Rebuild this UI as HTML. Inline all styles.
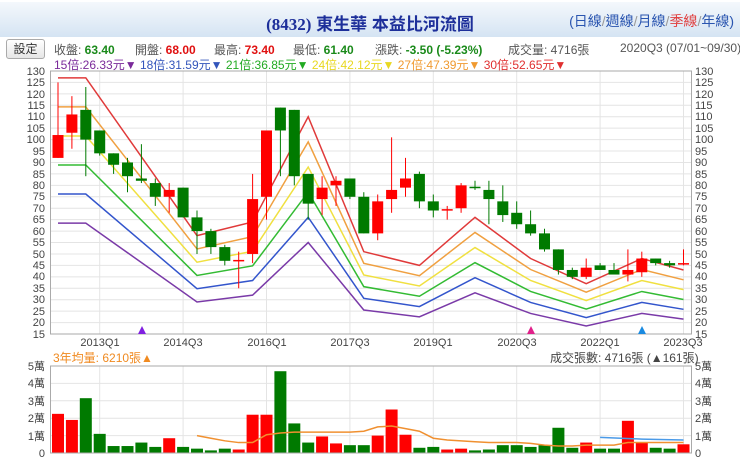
<!DOCTYPE html>
<html><head><meta charset="utf-8">
<style>
*{margin:0;padding:0;box-sizing:border-box}
body{width:740px;height:459px;background:#fff;font-family:"Liberation Sans","Noto Sans CJK TC",sans-serif;position:relative;overflow:hidden;color:#555}
.hdr{position:absolute;left:0;top:2px;width:740px;height:35px;background:linear-gradient(#f4f8fc,#d5e4f3);}
.title{position:absolute;left:0;width:740px;top:10px;text-align:center;font-size:17px;color:#1d2f9a;font-weight:bold}
.title span{font-family:"Liberation Serif","Noto Serif CJK SC",serif}
.links{position:absolute;right:6px;top:11px;font-size:14px;color:#2a55b0}
.links i{font-style:normal;color:#999}
.btn{position:absolute;left:6px;top:39px;width:39px;height:20px;border:1px solid #aaa;border-radius:3px;background:linear-gradient(#fff,#e6e6e6);font-size:12px;color:#333;text-align:center;line-height:18px}
.r2{position:absolute;top:41px;font-size:12px;white-space:nowrap}
.r3{position:absolute;top:56px;font-size:12px;white-space:nowrap}
.g{color:#1a8a1a;font-weight:bold}.rd{color:#e01010;font-weight:bold}
svg{position:absolute;left:0;top:0}
</style></head><body>
<div class="hdr"></div>
<div class="title"><span>(8432)</span> 東生華 本益比河流圖</div>
<div class="links">(日線<i>/</i>週線<i>/</i>月線<i>/</i><b style="font-weight:normal;color:#e04040">季線</b><i>/</i>年線)</div>
<div class="btn">設定</div>
<div class="r2" style="left:54px">收盤: <span class="g">63.40</span></div>
<div class="r2" style="left:135px">開盤: <span class="rd">68.00</span></div>
<div class="r2" style="left:214px">最高: <span class="rd">73.40</span></div>
<div class="r2" style="left:293px">最低: <span class="g">61.40</span></div>
<div class="r2" style="left:375px">漲跌: <span class="g">-3.50</span> <span class="g">(-5.23%)</span></div>
<div class="r2" style="left:508px">成交量: 4716張</div>
<div class="r2" style="left:620px">2020Q3 (07/01~09/30)</div>
<div class="r3" style="left:54px"><span style="color:#7a2a9a">15倍:26.33元▼</span> <span style="color:#3355bb">18倍:31.59元▼</span> <span style="color:#22aa22">21倍:36.85元▼</span> <span style="color:#e8d820">24倍:42.12元▼</span> <span style="color:#f09a30">27倍:47.39元▼</span> <span style="color:#e03030">30倍:52.65元▼</span></div>
<div class="r2" style="left:53px;top:349px;color:#f08a20">3年均量: 6210張▲</div>
<div class="r2" style="left:550px;top:349px;color:#444">成交張數: 4716張 (▲161張)</div>
<svg id="s" width="740" height="459" font-family="Liberation Sans,sans-serif" font-size="11" fill="#444">
<g id="grid" stroke="#e4e4e4" stroke-width="1"></g>
<g text-anchor="end">
<text x="45" y="75">130</text><text x="45" y="86">125</text><text x="45" y="98">120</text><text x="45" y="109">115</text><text x="45" y="120">110</text><text x="45" y="132">105</text><text x="45" y="143">100</text><text x="45" y="155">95</text><text x="45" y="166">90</text><text x="45" y="178">85</text><text x="45" y="189">80</text><text x="45" y="200">75</text><text x="45" y="212">70</text><text x="45" y="223">65</text><text x="45" y="235">60</text><text x="45" y="246">55</text><text x="45" y="258">50</text><text x="45" y="269">45</text><text x="45" y="280">40</text><text x="45" y="292">35</text><text x="45" y="303">30</text><text x="45" y="315">25</text><text x="45" y="326">20</text><text x="45" y="338">15</text>
<text x="45" y="370">5萬</text><text x="45" y="387">4萬</text><text x="45" y="405">3萬</text><text x="45" y="422">2萬</text><text x="45" y="440">1萬</text><text x="45" y="457">0</text>
</g>
<g text-anchor="start">
<text x="695" y="75">130</text><text x="695" y="86">125</text><text x="695" y="98">120</text><text x="695" y="109">115</text><text x="695" y="120">110</text><text x="695" y="132">105</text><text x="695" y="143">100</text><text x="695" y="155">95</text><text x="695" y="166">90</text><text x="695" y="178">85</text><text x="695" y="189">80</text><text x="695" y="200">75</text><text x="695" y="212">70</text><text x="695" y="223">65</text><text x="695" y="235">60</text><text x="695" y="246">55</text><text x="695" y="258">50</text><text x="695" y="269">45</text><text x="695" y="280">40</text><text x="695" y="292">35</text><text x="695" y="303">30</text><text x="695" y="315">25</text><text x="695" y="326">20</text><text x="695" y="338">15</text>
<text x="695" y="370">5萬</text><text x="695" y="387">4萬</text><text x="695" y="405">3萬</text><text x="695" y="422">2萬</text><text x="695" y="440">1萬</text><text x="695" y="457">0</text>
</g>
<g text-anchor="middle">
<text x="100" y="346">2013Q1</text><text x="183" y="346">2014Q3</text><text x="267" y="346">2016Q1</text><text x="350" y="346">2017Q3</text><text x="433" y="346">2019Q1</text><text x="517" y="346">2020Q3</text><text x="600" y="346">2022Q1</text><text x="683" y="346">2023Q3</text>
</g>
<g id="d"></g>
<rect x="50.5" y="71" width="641" height="263" fill="none" stroke="#aaa"/>
<rect x="50.5" y="366" width="641" height="87" fill="none" stroke="#aaa"/>
<polygon points="142,326 138,334 146,334" fill="#8020e0"/>
<polygon points="531,326 527,334 535,334" fill="#e0208a"/>
<polygon points="642,326 638,334 646,334" fill="#1a8ae0"/>
</svg>
<script>
var NS="http://www.w3.org/2000/svg",d=document.getElementById('d'),gr=document.getElementById('grid');
function el(t,a,p){var e=document.createElementNS(NS,t);for(var k in a)e.setAttribute(k,a[k]);(p||d).appendChild(e);return e}
function X(i){return 58+i*13.9}
function Y(p){return 71+(130-p)*2.287}
function V(v){return 453-v*17.4}
for(var p=15;p<=130;p+=5)el('line',{x1:50,x2:691,y1:Y(p),y2:Y(p)},gr);
for(var v=0;v<=5;v++)el('line',{x1:50,x2:691,y1:V(v),y2:V(v)},gr);
[3,9,15,21,27,33,39,45].forEach(function(i){el('line',{x1:X(i),x2:X(i),y1:71,y2:334},gr);el('line',{x1:X(i),x2:X(i),y1:366,y2:453},gr)});
var vi=[0,2,10,14,18,22,26,30,34,38,42,45],eps=[127,127,58,64,110,51,45,66,48,37,48,43].map(function(v){return v/30});
[[15,'#7a3aa8'],[18,'#3355cc'],[21,'#33bb33'],[24,'#f0e040'],[27,'#f0a040'],[30,'#e03a3a']].forEach(function(m){
 el('polyline',{points:vi.map(function(i,k){return X(i)+','+Y(eps[k]*m[0])}).join(' '),fill:'none',stroke:m[1],'stroke-width':1.5});
});
var C=[[92,102,125,92],[103,111,119,96],[113,100,123,84],[104,94,104,93],[94,89,94,85],[90,84,92,77],[83,82,98,81],[81,75,83,71],[75,78,81,68],[79,66,79,66],[66,60,69,50],[60,53,61,50],[53,47,54,45],[47,47.4,51,35],[50,74,85,46],[75,104,104,65],[114,104,114,84],[113,84,113,80],[85,72,85,65],[74,79,84,67],[80,82,84,71],[83,75,83,74],[75,59,77,59],[59,73,76,56],[74,78,101,68],[79,83,92,75],[85,73,86,70],[73,69,76,66],[69,69.6,71,65],[70,80,81,68],[79.4,79,82,78],[78,74,82,63],[73,67,80,64],[68,63,73,61],[63,59,69,58],[59,52,61,51],[52,43,52,41],[43,40,44,39],[40,44,48,39],[45,43,46,43],[43,41,46,41],[41,43,52,38],[42,48,51,40],[48,46,48,45],[46,45,47,44],[45.6,46,52,45]];
C.forEach(function(c,i){var x=X(i),up=c[1]>c[0],col=up?'#ff0000':'#007a00';
 el('line',{x1:x,x2:x,y1:Y(c[2]),y2:Y(c[3]),stroke:col,'stroke-width':1});
 var t=Y(Math.max(c[0],c[1])),b=Y(Math.min(c[0],c[1]));
 el('rect',{x:x-5.5,y:t,width:11,height:Math.max(b-t,1.5),fill:col});
});
var vol=[2.25,1.9,3.15,1.1,.4,.4,.6,.35,.85,.35,.25,.15,.25,.2,2.2,2.2,4.7,1.7,.6,.95,.55,.45,.45,1,2.5,1.05,.3,.35,.2,.25,.15,.2,.45,.45,.35,.45,1.45,.3,.6,.25,.25,1.85,.6,.3,.25,.5];
vol.forEach(function(v,i){var up=C[i][1]>C[i][0];el('rect',{x:X(i)-6,y:V(v),width:12,height:v*17.4,fill:up?'#ff0000':'#007a00'})});
var av=[1,.85,.7,.6,.6,1.05,1.15,1.2,1.2,1.2,1.2,1.2,1.25,1.5,1.55,1.4,1.25,.85,.75,.7,.65,.6,.6,.6,.55,.45,.4,.4,.45,.45,.45,.6,.6,.6,.6,.6];
el('polyline',{points:av.map(function(v,k){return X(k+10)+','+V(v)}).join(' '),fill:'none',stroke:'#f09030','stroke-width':1.5});
el('polyline',{points:[[39,.9],[42,.8],[45,.75]].map(function(a){return X(a[0])+','+V(a[1])}).join(' '),fill:'none',stroke:'#4a9ae8','stroke-width':1.5});
</script>
</body></html>
